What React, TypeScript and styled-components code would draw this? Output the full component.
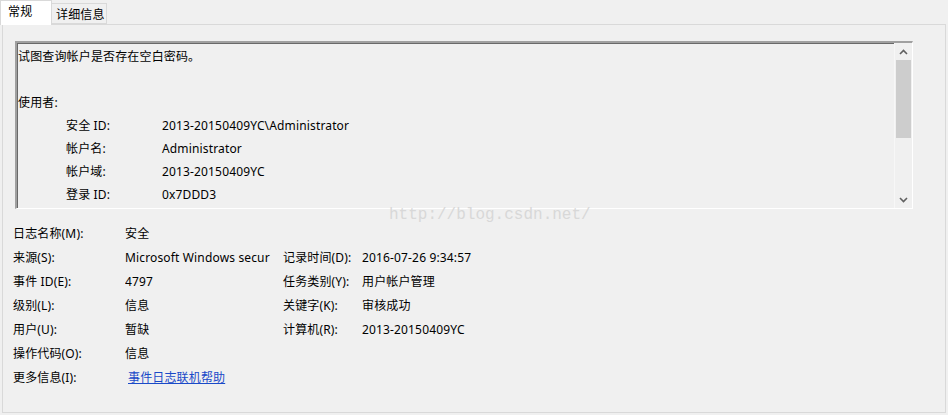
import React from "react";
import styled, { createGlobalStyle } from "styled-components";

const Global = createGlobalStyle`
  html, body { margin: 0; padding: 0; background: #f0f0f0; }
  body {
    font-family: "Noto Sans", "Noto Sans CJK SC", sans-serif;
    font-size: 12px;
    letter-spacing: 0.15px;
    color: #000;
  }
`;

const Window = styled.div`
  width: 948px;
  height: 415px;
  background: #f0f0f0;
  position: relative;
  overflow: hidden;
  box-sizing: border-box;
`;

const TabStrip = styled.div`
  display: flex;
  align-items: flex-end;
  height: 24px;
`;

const Tab = styled.div<{ $active?: boolean; $w: number }>`
  box-sizing: border-box;
  width: ${(p) => p.$w}px;
  height: ${(p) => (p.$active ? "25px" : "21px")};
  padding: ${(p) => (p.$active ? "0 0 2px 7px" : "2px 0 0 4px")};
  display: flex;
  align-items: center;
  background: ${(p) => (p.$active ? "#ffffff" : "#f0f0f0")};
  border: 1px solid #d9d9d9;
  border-bottom: ${(p) => (p.$active ? "none" : "1px solid #d9d9d9")};
  margin-left: ${(p) => (p.$active ? "0" : "-1px")};
  margin-bottom: ${(p) => (p.$active ? "-1px" : "0")};
  position: relative;
  z-index: ${(p) => (p.$active ? 2 : 1)};
  line-height: 1;
`;

const Panel = styled.div`
  box-sizing: border-box;
  margin: 0 2px;
  height: 389px;
  width: 944px;
  border: 1px solid #d9d9d9;
  padding: 16px 0 0 12px;
  position: relative;
`;

const TextBox = styled.div`
  box-sizing: border-box;
  width: 898px;
  height: 168px;
  border-top: 2px solid #a0a0a0;
  border-left: 2px solid #a0a0a0;
  border-right: 1px solid #ffffff;
  border-bottom: 1px solid #ffffff;
  box-shadow: inset 1px 1px 0 #696969;
  display: flex;
`;

const TextContent = styled.div`
  flex: 1;
  padding: 2px 0 0 1px;
  line-height: 23px;
  overflow: hidden;
`;

const Line = styled.div<{ $indent?: boolean }>`
  height: 23px;
  display: flex;
  padding-left: ${(p) => (p.$indent ? "48px" : "0")};
`;

const SubLabel = styled.span`
  width: 96px;
  flex: none;
`;

const Scrollbar = styled.div`
  width: 17px;
  flex: none;
  display: flex;
  flex-direction: column;
  background: #f0f0f0;
  border-left: 1px solid #f7f7f7;
`;

const ArrowBtn = styled.div`
  height: 17px;
  display: flex;
  align-items: center;
  justify-content: center;
`;

const Track = styled.div`
  flex: 1;
  padding: 0 1px;
  display: flex;
  flex-direction: column;
`;

const Thumb = styled.div`
  height: 78px;
  background: #cdcdcd;
`;

const Fields = styled.div`
  display: grid;
  grid-template-columns: 112px 148px 10px 79px auto;
  grid-auto-rows: 24px;
  margin-top: 12px;
  margin-left: -2px;
  align-items: center;
`;

const Label = styled.div`
  white-space: nowrap;
`;

const Value = styled.div`
  white-space: nowrap;
  overflow: hidden;
`;

const Gap = styled.div``;

const LinkText = styled.a`
  color: #1a4ac8;
  text-decoration: underline;
  margin-left: 3px;
  cursor: pointer;
`;

const Watermark = styled.div`
  position: absolute;
  left: 386px;
  top: 181px;
  font-family: "Liberation Mono", monospace;
  font-size: 16px;
  letter-spacing: 0;
  color: #d8d8d8;
  pointer-events: none;
`;

const Up = () => (
  <svg width="9" height="6" viewBox="0 0 9 6">
    <path d="M1 5 L4.5 1.5 L8 5" fill="none" stroke="#606060" strokeWidth="1.6" />
  </svg>
);

const Down = () => (
  <svg width="9" height="6" viewBox="0 0 9 6">
    <path d="M1 1 L4.5 4.5 L8 1" fill="none" stroke="#606060" strokeWidth="1.6" />
  </svg>
);

export default function App() {
  return (
    <Window>
      <Global />
      <TabStrip>
        <Tab $active $w={52}>常规</Tab>
        <Tab $w={56}>详细信息</Tab>
      </TabStrip>
      <Panel>
        <TextBox>
          <TextContent>
            <Line>试图查询帐户是否存在空白密码。</Line>
            <Line />
            <Line>使用者:</Line>
            <Line $indent>
              <SubLabel>安全 ID:</SubLabel>
              <span>2013-20150409YC\Administrator</span>
            </Line>
            <Line $indent>
              <SubLabel>帐户名:</SubLabel>
              <span>Administrator</span>
            </Line>
            <Line $indent>
              <SubLabel>帐户域:</SubLabel>
              <span>2013-20150409YC</span>
            </Line>
            <Line $indent>
              <SubLabel>登录 ID:</SubLabel>
              <span>0x7DDD3</span>
            </Line>
          </TextContent>
          <Scrollbar>
            <ArrowBtn><Up /></ArrowBtn>
            <Track><Thumb /></Track>
            <ArrowBtn><Down /></ArrowBtn>
          </Scrollbar>
        </TextBox>
        <Fields>
          <Label>日志名称(M):</Label>
          <Value>安全</Value>
          <Gap /><Gap /><Gap />

          <Label>来源(S):</Label>
          <Value>Microsoft Windows secur</Value>
          <Gap />
          <Label>记录时间(D):</Label>
          <Value>2016-07-26 9:34:57</Value>

          <Label>事件 ID(E):</Label>
          <Value>4797</Value>
          <Gap />
          <Label>任务类别(Y):</Label>
          <Value>用户帐户管理</Value>

          <Label>级别(L):</Label>
          <Value>信息</Value>
          <Gap />
          <Label>关键字(K):</Label>
          <Value>审核成功</Value>

          <Label>用户(U):</Label>
          <Value>暂缺</Value>
          <Gap />
          <Label>计算机(R):</Label>
          <Value>2013-20150409YC</Value>

          <Label>操作代码(O):</Label>
          <Value>信息</Value>
          <Gap /><Gap /><Gap />

          <Label>更多信息(I):</Label>
          <Value><LinkText>事件日志联机帮助</LinkText></Value>
          <Gap /><Gap /><Gap />
        </Fields>
        <Watermark>http://blog.csdn.net/</Watermark>
      </Panel>
    </Window>
  );
}
